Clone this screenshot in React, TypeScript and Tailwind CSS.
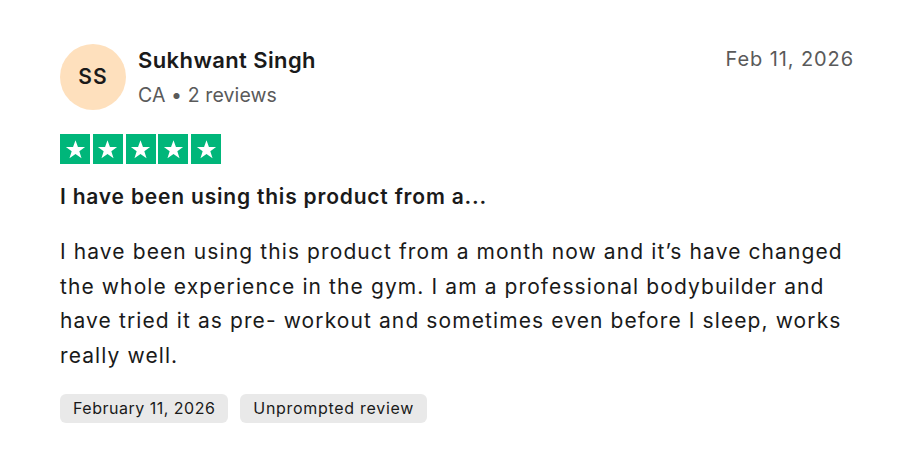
import React from "react";

function Star() {
  return (
    <div className="w-[30px] h-[30px] bg-[#00b67a] flex items-center justify-center">
      <svg width="23" height="23" viewBox="0 0 24 24">
        <path d="M12 2.3l2.55 7.2h7.45l-6 4.45 2.3 7.25L12 16.7l-6.3 4.5 2.3-7.25-6-4.45h7.45z" fill="#fff" />
      </svg>
    </div>
  );
}

export default function App() {
  return (
    <div className="w-[914px] h-[468px] bg-white text-[#1a1a1a] font-['Inter',sans-serif] px-[60px] pt-[44px]">
      <div className="flex items-start justify-between">
        <div className="flex items-center gap-[12px]">
          <div className="w-[66px] h-[66px] rounded-full bg-[#fee0bd] flex items-center justify-center text-[21px] font-semibold tracking-[1px]">
            SS
          </div>
          <div className="flex flex-col">
            <div className="text-[22px] font-semibold leading-[30px] tracking-[0.4px]">Sukhwant Singh</div>
            <div className="text-[19.5px] text-[#5a5a5a] leading-[28px] mt-[6px] tracking-[0.1px]">CA • 2 reviews</div>
          </div>
        </div>
        <div className="text-[20px] text-[#5a5a5a] leading-[28px] pt-[1px] tracking-[0.9px]">Feb 11, 2026</div>
      </div>
      <div className="flex gap-[2.75px] mt-[24px]">
        <Star />
        <Star />
        <Star />
        <Star />
        <Star />
      </div>
      <div className="mt-[19px] text-[21px] font-semibold leading-[28px] tracking-[0.8px]">
        I have been using this product from a...
      </div>
      <div className="mt-[24px] text-[21px] leading-[34.7px] tracking-[1.1px] w-[800px]">
        I have been using this product from a month now and it’s have changed the whole experience in the gym. I am a professional bodybuilder and have tried it as pre- workout and sometimes even before I sleep, works really well.
      </div>
      <div className="flex gap-[12px] mt-[20px]">
        <div className="h-[29px] px-[13px] rounded-[6px] bg-[#e9e9e9] text-[16px] tracking-[0.5px] flex items-center">February 11, 2026</div>
        <div className="h-[29px] px-[13px] rounded-[6px] bg-[#e9e9e9] text-[16px] tracking-[0.7px] flex items-center">Unprompted review</div>
      </div>
    </div>
  );
}
